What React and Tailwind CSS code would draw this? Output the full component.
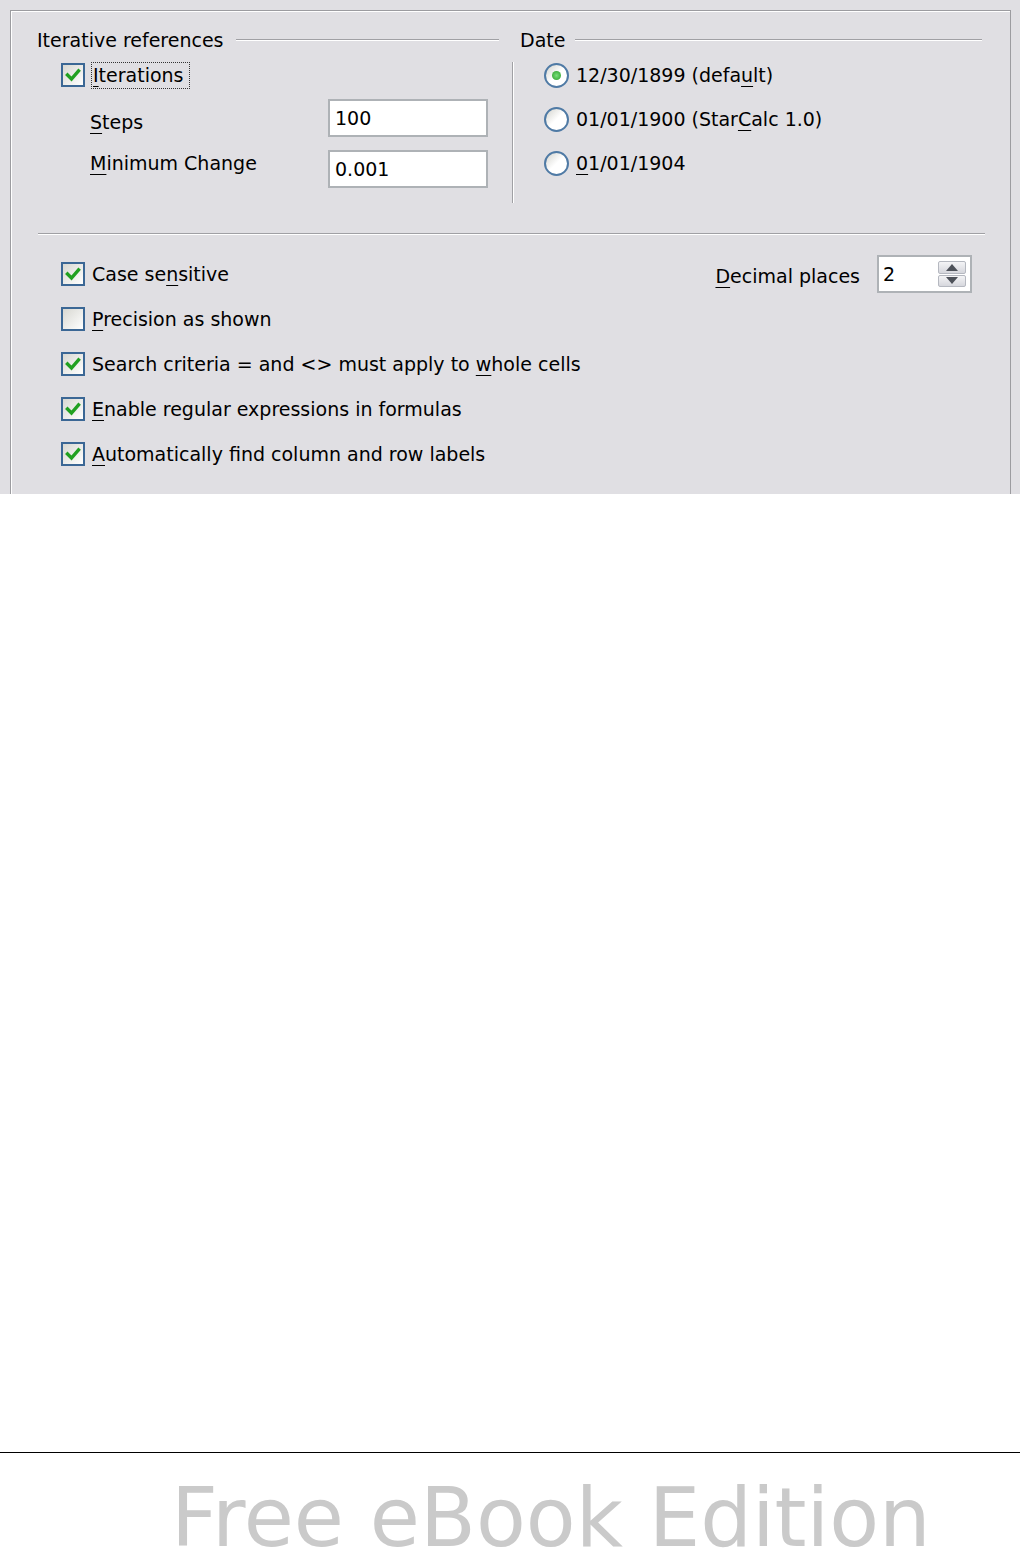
import React from 'react';

const U = ({ children }) => <span className="underline decoration-1 underline-offset-[4px]">{children}</span>;

function CheckBox({ checked }) {
  return (
    <div className="w-[24px] h-[24px] shrink-0 border-2 border-[#3b6795] bg-linear-to-br from-[#d8d8d2] to-white flex items-center justify-center">
      {checked && (
        <svg width="16" height="16" viewBox="0 0 16 16">
          <polyline points="2.5,8 6.5,12 13.5,4" fill="none" stroke="#21a121" strokeWidth="3.4" strokeLinecap="square" />
        </svg>
      )}
    </div>
  );
}

function Radio({ checked }) {
  return (
    <div className="w-[25px] h-[25px] shrink-0 rounded-full border-2 border-[#4f7aa5] bg-linear-to-br from-[#d4d4ce] via-white to-white flex items-center justify-center">
      {checked && <div className="w-[9px] h-[9px] rounded-full bg-radial from-[#7be07a] to-[#1f9c1f]" />}
    </div>
  );
}

function CheckRow({ checked, children }) {
  return (
    <div className="flex items-center h-[24px] pl-[24px]">
      <CheckBox checked={checked} />
      <span className="ml-[7px]">{children}</span>
    </div>
  );
}

function TextBox({ value }) {
  return (
    <div className="w-[160px] h-[38px] shrink-0 border-2 border-[#aeb2b6] bg-white pl-[5px] flex items-center">
      {value}
    </div>
  );
}

export default function App() {
  return (
    <div className="w-[1022px] min-h-[1551px] bg-white font-['DejaVu_Sans',sans-serif] text-[19px] leading-[24px] text-black">
      <div className="w-[1020px] h-[494px] bg-[#e0dfe3] pt-[10px] pl-[10px] overflow-hidden">
        <div className="w-[1001px] h-[500px] border-l border-t border-r border-[#9c9ca0] shadow-[inset_1px_1px_0_#ffffff]">
          {/* top groups */}
          <div className="flex pt-[19px] pl-[26px]">
            <div className="w-[462px]">
              <div className="flex items-center h-[20px]">
                <span>Iterative references</span>
                <div className="flex-1 ml-[12px] border-t border-[#a0a0a4] border-b border-b-white" />
              </div>
              <div className="mt-[13px] flex items-center h-[24px] pl-[24px]">
                <CheckBox checked />
                <span className="ml-[6px] pl-px pr-[5px] h-[27px] flex items-center border border-dotted border-[#333]">
                  <U>I</U>terations
                </span>
              </div>
              <div className="mt-[12px] flex items-start">
                <span className="w-[291px] shrink-0 pl-[53px] pt-[11px]"><U>S</U>teps</span>
                <TextBox value="100" />
              </div>
              <div className="mt-[13px] flex items-start">
                <span className="w-[291px] shrink-0 pl-[53px] pt-[1px]"><U>M</U>inimum Change</span>
                <TextBox value="0.001" />
              </div>
            </div>
            <div className="ml-[13px] w-[470px]">
              <div className="flex items-center h-[20px] pl-[8px]">
                <span>Date</span>
                <div className="flex-1 ml-[10px] border-t border-[#a0a0a4] border-b border-b-white" />
              </div>
              <div className="mt-[12px] h-[141px] flex">
                <div className="w-px bg-[#a0a0a4]" />
                <div className="w-px bg-white" />
                <div className="pl-[30px] pt-[1px] flex flex-col gap-[20px]">
                  <div className="flex items-center h-[24px]">
                    <Radio checked />
                    <span className="ml-[7px]">12/30/1899 (defa<U>u</U>lt)</span>
                  </div>
                  <div className="flex items-center h-[24px]">
                    <Radio />
                    <span className="ml-[7px]">01/01/1900 (Star<U>C</U>alc 1.0)</span>
                  </div>
                  <div className="flex items-center h-[24px]">
                    <Radio />
                    <span className="ml-[7px]"><U>0</U>1/01/1904</span>
                  </div>
                </div>
              </div>
            </div>
          </div>

          {/* separator */}
          <div className="mt-[30px] ml-[27px] w-[947px] border-t border-[#a0a0a4] border-b border-b-white" />

          {/* options */}
          <div className="mt-[27px] pl-[26px] pr-[38px] flex flex-col gap-[21px]">
            <div className="flex items-center justify-between h-[24px]">
              <CheckRow checked>Case se<U>n</U>sitive</CheckRow>
              <div className="flex items-center">
                <span className="mt-[4px]"><U>D</U>ecimal places</span>
                <div className="ml-[17px] w-[95px] h-[38px] border-2 border-[#aeb2b6] bg-white flex items-center justify-between pl-[4px] pr-[4px]">
                  <span>2</span>
                  <div className="w-[28px] h-[26px] flex flex-col gap-px">
                    <div className="flex-1 rounded-[2px] border border-[#b5b8c0] bg-linear-to-b from-[#f4f4f6] to-[#d6d7dd] flex items-center justify-center">
                      <svg width="12" height="7" viewBox="0 0 12 7"><polygon points="6,0 12,7 0,7" fill="#4d5159" /></svg>
                    </div>
                    <div className="flex-1 rounded-[2px] border border-[#b5b8c0] bg-linear-to-b from-[#f4f4f6] to-[#d6d7dd] flex items-center justify-center">
                      <svg width="12" height="7" viewBox="0 0 12 7"><polygon points="0,0 12,0 6,7" fill="#4d5159" /></svg>
                    </div>
                  </div>
                </div>
              </div>
            </div>
            <CheckRow><U>P</U>recision as shown</CheckRow>
            <CheckRow checked>Search criteria = and &lt;&gt; must apply to <U>w</U>hole cells</CheckRow>
            <CheckRow checked><U>E</U>nable regular expressions in formulas</CheckRow>
            <CheckRow checked><U>A</U>utomatically find column and row labels</CheckRow>
          </div>
        </div>
      </div>

      <div className="mt-[958px] w-[1020px] h-px bg-black" />
      <div className="mt-[33px] pl-[171px] text-[81.5px] leading-[64px] text-[#cacaca] whitespace-nowrap">Free eBook Edition</div>
    </div>
  );
}
